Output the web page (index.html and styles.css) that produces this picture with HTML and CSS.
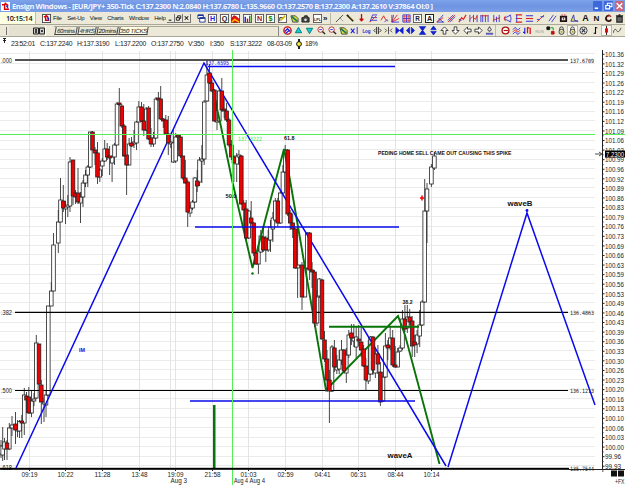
FILE: index.html
```html
<!DOCTYPE html>
<html lang="en">
<head>
    <meta charset="UTF-8">
    <title>Ensign Windows</title>
    <link rel="stylesheet" href="styles.css">
</head>
<body>
    <header class="titlebar">
        <svg class="logo" viewBox="0 0 10 10"><rect width="10" height="10" fill="#fff"/><path d="M1 3h3v5h5M4 1l4 3" stroke="#d00" stroke-width="1.6" fill="none"/><path d="M5 4h3v4z" fill="#22c"/></svg>
        <h1>Ensign Windows - [EUR/JPY+ 350-Tick C:137.2300 N:2.0840 H:137.6780 L:135.9660 O:137.2570 B:137.2300 A:137.2610 V:37864 OI:0 ]</h1>
        <div class="win-buttons">
            <span><svg viewBox="0 0 8 8"><path d="M1.5 6h3" stroke="#fff" stroke-width="1.4"/></svg></span>
            <span><svg viewBox="0 0 8 8"><path d="M3 3V1.5h4v3H5.5M1.5 3.5h3.5v3H1.5z" stroke="#fff" fill="none"/></svg></span>
            <span class="close"><svg viewBox="0 0 8 8"><path d="M1.5 1.5l5 5M6.500 1.500l-5 5" stroke="#fff" stroke-width="1.3"/></svg></span>
        </div>
    </header>

    <div class="menubar">
        <div class="clock">10:15:14</div>
        <svg class="logo" viewBox="0 0 10 10"><rect x=".5" y=".5" width="9" height="9" fill="#fff" stroke="#444"/><path d="M2 3h2v4h4M4 1l3 3" stroke="#d00" stroke-width="1.6" fill="none"/><path d="M5 4h3v4z" fill="#22c"/></svg>
        <nav>
            <a>File</a><a>Set-Up</a><a>View</a><a>Charts</a><a>Window</a><a>Help</a>
        </nav>
        <div class="mdi">
            <svg viewBox="0 0 8 9"><path d="M2 7h3" stroke="#111" stroke-width="1.2"/></svg>
            <svg viewBox="0 0 8 9"><path d="M3 4V2h3.500v3H5M1.500 4H5v3H1.500z" stroke="#111" fill="none"/></svg>
            <svg viewBox="0 0 8 9"><path d="M2 2.500l4 4M6 2.500l-4 4" stroke="#111" stroke-width="1.2"/></svg>
        </div>
        <div class="icons main-icons" data-icons="cascade"></div>
        <div class="icons app-icons" data-icons="h q hill bars n dollar edit find camera lpl"></div>
        <span class="more">»</span>
        <div class="icons draw-icons" data-icons="line pencil down fork zig fan grid boxr boxa angle pitch wave cycles vlines bars3 arc levels lines trend chan alarm tri a n2 magnet trash"></div>
    </div>

    <div class="tabbar">
        <span class="grip"></span>
        <div class="combo"><svg viewBox="0 0 12 8"><path d="M.5 1h5v6h-5zM6.500 1h5v6h-5z" fill="#ccc" stroke="#222"/><path d="M2 3h2M2 5h2M8 4h2" stroke="#111" stroke-width="1.3"/></svg></div>
        <div class="tabs"><span class="t1">60mins</span><span class="t2">4HRS</span><span class="t3">20mins</span><span class="t4">350 TICKS</span></div>
        <div class="icons chart-icons" data-icons="globe cup cdown zoom zoom find xscale log harrow hin squeeze expand hour updown up dn left right user"></div>
        <div class="icons tool-icons" data-icons="clock waves ohlc run swap lock lock* ball bar candle* curve"></div>
    </div>

    <div class="info">
        <svg class="pin" viewBox="0 0 5 6"><path d="M1 .5h3M1 2.500h3M2.500 0v5" stroke="#222" fill="none"/></svg>
        <span class="i1">23:52:01</span><span class="i2">C:137.2240</span><span class="i3">H:137.3190</span><span class="i4">L:137.2200</span><span class="i5">O:137.2750</span><span class="i6">V:350</span><span class="i7">I:350</span><span class="i8">S:137.3222</span><span class="i9">08-03-09</span>
        <svg class="watch" viewBox="0 0 6 10"><path d="M2 0h2v10H2z" fill="#222"/><circle cx="3" cy="5" r="2.4" fill="#fe3" stroke="#111"/></svg>
        <span>18%</span>
    </div>

    <main>
        <svg id="chart" viewBox="0 50 625 435" width="625" height="435"></svg>
    </main>

    <script src="chart.js"></script>
</body>
</html>
```
FILE: styles.css
```css
body {
    margin: 0;
    width: 625px;
    height: 485px;
    overflow: hidden;
    background: #fff;
    font-family: "Liberation Sans", Arial, sans-serif;
    font-size: 7px;
    color: #111;
}

svg {
    display: block;
    flex: none;
}

.titlebar,
.menubar,
.tabbar,
.info {
    display: flex;
    align-items: center;
    box-sizing: border-box;
    white-space: nowrap;
}

.titlebar {
    height: 12px;
    padding: 0 1px;
    background: linear-gradient(#7ea3ea, #6d93e2 50%, #7d9fe6);
}

.titlebar h1 {
    flex: 1;
    margin: 0 0 0 2px;
    font: bold 7.5px/12px "Open Sans", "Noto Sans", sans-serif;
    letter-spacing: -0.39px;
    color: #f4f7ff;
}

.logo {
    width: 9px;
    height: 9px;
}

.win-buttons {
    display: flex;
    gap: 2px;
}

.win-buttons span {
    width: 9px;
    height: 10px;
    background: #3c68dc;
    border-radius: 1px;
}

.win-buttons .close {
    background: #c9657e;
}

.win-buttons svg {
    width: 9px;
    height: 10px;
}

.menubar,
.tabbar {
    background: #ece9d8;
    border-bottom: 1px solid #aaa899;
}

.menubar {
    height: 13px;
}

.clock {
    flex: none;
    box-sizing: border-box;
    width: 36px;
    padding-left: 6px;
    margin-right: 6px;
    background: #ffffe1;
    font: 7.2px/12px "Open Sans", sans-serif;
    font-weight: 600;
    letter-spacing: -0.3px;
    border-right: 1px solid #bbb;
}

nav {
    display: flex;
    flex: none;
    gap: 5.5px;
    width: 114px;
    margin-left: 2px;
    font-size: 6px;
    letter-spacing: -0.25px;
}

.mdi {
    display: flex;
    flex: none;
    width: 25px;
    margin-right: 4px;
}

.mdi svg {
    box-sizing: border-box;
    width: 8px;
    height: 9px;
    border: solid #777;
    border-width: 0 1px 1px 0;
}

.icons {
    display: flex;
    flex: none;
    justify-content: space-between;
}

.icons span {
    width: 11px;
    height: 11px;
    display: flex;
    align-items: center;
    justify-content: center;
}

.icons .pressed {
    background: #f8f7f1;
    box-shadow: inset 0 0 0 1px #b9b6a7;
}

.icons svg {
    width: 9px;
    height: 9px;
}

.main-icons {
    width: 11px;
}

.app-icons {
    width: 116px;
}

.more {
    flex: none;
    width: 7px;
    font-size: 8px;
    font-weight: bold;
    line-height: 7px;
}

.draw-icons {
    width: 291px;
    padding-left: 3px;
    border-left: 1px solid #bbb8a8;
}

.tabbar {
    height: 12px;
}

.grip {
    width: 2px;
    height: 8px;
    margin: 0 2px 0 4px;
    border-right: 1px solid #777;
}

.combo {
    display: flex;
    flex: none;
    align-items: center;
    justify-content: flex-end;
    box-sizing: border-box;
    width: 37px;
    height: 10px;
    margin-right: 8px;
    background: #e4e1d0;
    border-right: 1px solid #fff;
}

.combo svg {
    width: 12px;
    height: 8px;
}

.tabs {
    display: flex;
    flex: none;
    box-sizing: border-box;
    width: 225px;
    height: 10px;
    border-top: 1px solid #aaa899;
    border-right: 1px solid #888;
    margin-right: 3px;
    font-size: 6px;
    letter-spacing: -0.25px;
}

.tabs span {
    box-sizing: border-box;
    height: 8px;
    margin-left: 1px;
    line-height: 8px;
    text-align: center;
    border: solid #444;
    border-width: 0 1px 1px;
    transform: skewX(-10deg);
}

.t1 { width: 22px; }
.t2 { width: 18px; }
.t3 { width: 21px; }
.tabs .t4 {
    width: 29px;
    background: #ffffe1;
}

.chart-icons {
    width: 213px;
    border-right: 1px solid #bbb8a8;
}

.tool-icons {
    width: 123px;
    margin-left: 4px;
}

.info {
    height: 13px;
    font-size: 6.8px;
    letter-spacing: -0.3px;
    color: #222;
}

.info span {
    flex: none;
}

.pin {
    width: 5px;
    height: 6px;
    margin: 0 4px 5px 2px;
}

.i1 { width: 29px; }
.i2 { width: 37px; }
.i3 { width: 38px; }
.i4 { width: 36px; }
.i5 { width: 37px; }
.i6 { width: 22px; }
.i7 { width: 20px; }
.i8 { width: 37px; }
.i9 { width: 29px; }

.watch {
    width: 6px;
    height: 10px;
    margin-right: 3px;
}

.grid { stroke: #ebebeb; }
.grid-v { stroke: #e4e4e4; }
.wick { stroke: #333; stroke-width: 0.9; }
.body { stroke: #222; stroke-width: 0.8; }
.up { fill: #fff; }
.down { fill: #f00000; }
.blue { stroke: #0a0aee; stroke-width: 1.5; fill: none; }
.green { stroke: #087408; stroke-width: 1.9; fill: none; }
.cross { fill: #55ee55; }
.level { stroke: #000; stroke-width: 1.2; }
.axis { stroke: #222; stroke-width: 1; }
.label { font-size: 7px; fill: #222; }
.small { font-size: 6px; }
.note { font-size: 5.5px; }
.wave { font-size: 8px; }
.mono { font: 5.8px "DejaVu Sans Mono", monospace; fill: #111; }
.bold { font-weight: bold; fill: #111; }
.t-blue { fill: #1111dd; }
.t-green { fill: #3be83b; }
.t-white { fill: #fff; }
```
FILE: chart.js
```js
const pen = (d, c = '#222', w = 1, f = 'none') => `<path d="${d}" stroke="${c}" stroke-width="${w}" fill="${f}"/>`;
const letter = (t, c, size = 9) => `<text x="5" y="8.3" text-anchor="middle" font-size="${size}" font-weight="bold" fill="${c}">${t}</text>`;
const box = '<rect x=".5" y=".5" width="9" height="9" fill="#fff" stroke="#555"/>';

// toolbar icons, all on a 10x10 grid
const icons = {
    cascade: pen('M1 1h6v4H1zM3 4h6v5H3z', '#238', 1, '#fff') + pen('M1 1.5h6M3 4.500h6', '#139', 1.5),
    h: box + letter('H', '#22d', 8),
    q: box + letter('Q', '#222', 8),
    hill: box + pen('M1 9V5l2-3 3 1 3 3v3z', '#c00', 1, '#e11') + pen('M1 9l3-3 5 3', '#fc0', 1.5),
    bars: box + pen('M2.500 9V3', '#22d', 1.6) + pen('M5 9V5', '#d00', 1.6) + pen('M7.500 9V2', '#090', 1.6),
    n: box + letter('N', '#a11', 8),
    dollar: box + letter('$', '#080', 8),
    edit: box + pen('M2 8V4h5', '#222') + pen('M3 7l5-5', '#db0', 2),
    find: pen('M1 2h5l3 3v4H3z', '#444', 1, '#dd3') + pen('M2 3l6 5', '#176', 1.8),
    camera: pen('M1 4h2l1-2h3l1 2h1v5H1z', '#222', 1, '#444') + '<circle cx="5" cy="6.500" r="1.5" fill="#ddd"/>',
    lpl: box + letter('LPL', '#222', 4),
    line: pen('M1 9L9 1', '#444') + pen('M5 4l4 4', '#999'),
    pencil: pen('M1 1l7 7', '#222', 2) + pen('M3 2l5 5', '#da1', .8),
    down: pen('M5 0v8', '#c00', 1.4) + pen('M3 5.500h4L5 8z', '#c00', 1, '#c00'),
    fork: pen('M1 9L4 1h5M3 4h6M2 7h7', '#33d') + pen('M1 9L8 2', '#d33'),
    zig: pen('M1 7l3-5 2 4 3 2', '#d22') + pen('M5 9l3-3', '#33d'),
    fan: pen('M1 9L3 1M1 9L7 1M1 9l8-4', '#d22') + pen('M1 1v8h8', '#33d'),
    grid: pen('M1 1h8v8H1zM1 5h8M5 1v8', '#33d') + pen('M3 1v8M7 1v8M1 3h8M1 7h8', '#d33', .7),
    boxr: box + letter('R', '#222', 7),
    boxa: pen('M.5.5h9v9h-9z', '#222', 1.2, '#fff') + letter('A', '#222', 8),
    angle: pen('M1 9L8 1M1 9h8M3 5l5 4', '#33d') + pen('M1 9l7-5', '#d22'),
    pitch: pen('M1 7l6-6M3 9l6-6', '#33d') + pen('M1 9l8-8M2 4l4 4', '#d22'),
    wave: pen('M1 9l3-5 2 2 3-5', '#d22', 1.3) + pen('M1 6l3 1', '#33d'),
    cycles: pen('M1 1v8M5 1v8M9 1v8', '#33d') + pen('M1 6l3-3 3 3 2-4', '#d22'),
    vlines: pen('M1 1v8M3 1v8M6 1v8M9 1v8', '#33d') + pen('M1 2h8', '#d22'),
    bars3: pen('M2 1v8M5 3v6M8 1v8', '#33d') + pen('M1 7l8-3', '#d22'),
    arc: pen('M9 1L1 5l8 4M7 1a5 5 0 0 1 0 8', '#33d') + pen('M3 2a4 4 0 0 0 0 6', '#d22'),
    levels: pen('M2 1h7M2 5h7M2 9h7', '#d22', 1.2) + pen('M3 1v8', '#33d'),
    lines: pen('M1 2h8M1 8h8', '#33d', 1.2) + pen('M1 5h8', '#d22', 1.2),
    trend: pen('M1 9l8-8', '#d22') + pen('M1 6h3M5 3h4', '#33d'),
    chan: pen('M1 8l5-7M4 9l5-7', '#33d'),
    alarm: pen('M2 3h6v5H2z', '#211', 2, '#eee') + pen('M3 1h1M6 1h1M5 4v2', '#c11', 1.3),
    tri: pen('M1 8l3-7 1 6 4 1z', '#33b', 1, '#ee3'),
    a: letter('A', '#111', 10),
    n2: letter('N', '#111', 9),
    magnet: pen('M6 2a3 3 0 1 0 2 4', '#311', 2) + pen('M5 1l3 2', '#b22', 1.5),
    trash: pen('M2 3h6v6H2zM1 2h8M4 1h2', '#222', 1.2, '#666'),
    globe: '<circle cx="5" cy="5" r="4" fill="#fff" stroke="#c11" stroke-width="1.6"/>' + pen('M2 6l3-3 3 3M3 8l4-3', '#22d', 1.5),
    cup: pen('M5 1.500l3.500 6h-7z', '#077', 1, '#1cd'),
    cdown: pen('M5 8.500l3.500-6h-7z', '#077', 1, '#1cd'),
    zoom: '<circle cx="4" cy="4" r="3" fill="#fff" stroke="#a22"/>' + pen('M6 6l3 3', '#222', 1.5) + pen('M2.500 4h3', '#22d'),
    xscale: pen('M1 3l4 5M5 3L1 8', '#22d', 1.2) + pen('M8 1v8', '#22d'),
    log: letter('Log', '#22d', 5),
    harrow: pen('M3 3L1 5l2 2M7 3l2 2-2 2M4 1v8M6 1v8', '#222'),
    hin: pen('M1 3l2 2-2 2M9 3L7 5l2 2M5 1v8', '#444'),
    squeeze: pen('M1 1.500L5 5 1 8.500zM9 1.500L5 5l4 3.500z', '#12c', .8, '#12c'),
    expand: pen('M4 1.500L.5 5 4 8.500zM6 1.500L9.500 5 6 8.500z', '#12c', .8, '#12c'),
    hour: pen('M2 1h6L5 5l3 4H2l3-4z', '#12c', 1.2, '#12c'),
    updown: pen('M5 0L2 4h6zM5 10L2 6h6z', '#12c', .8, '#12c'),
    up: pen('M5 1l4 4H6.500v4h-3V5H1z', '#333', 1, '#fff'),
    dn: pen('M5 9L1 5h2.500V1h3v4H9z', '#333', 1, '#fff'),
    left: pen('M1 5l4-4v2.500h4v3H5V9z', '#333', 1, '#fff'),
    right: pen('M9 5L5 1v2.500H1v3h4V9z', '#333', 1, '#fff'),
    user: pen('M5 1l2 3-2 2-2-2zM1 8h8', '#667', 1.2, '#fff') + pen('M1 9h8', '#22d'),
    clock: '<circle cx="5" cy="5" r="3.800" fill="#fff" stroke="#a11" stroke-width="1.5"/>' + pen('M3 5h5', '#a11', 1.3),
    waves: pen('M1 4q3-4 4-1t4-1M1 9q3-4 4-1t4-1', '#33d') + pen('M1 6.500q3-4 4-1t4-1', '#d22'),
    ohlc: pen('M2 2v7M0 7h2', '#22d', 1.3) + pen('M5 1v7M8 2v7M5 2h2', '#d11', 1.4),
    run: letter('RUN', '#bbb8aa', 4.5),
    swap: pen('M1 1h3v3H1z', '#111', 1, '#111') + pen('M5 2h3v3', '#090') + pen('M6 6h3v3H6z', '#b11', 1, '#b11'),
    lock: pen('M3 5V3a2 2 0 0 1 4 0v2', '#333') + '<circle cx="5" cy="6.500" r="2.800" fill="#eed" stroke="#333"/>' + pen('M4 6.500h2', '#aa1', 2),
    ball: '<circle cx="5" cy="5" r="4" fill="#eee" stroke="#333"/>' + pen('M3 3l4 4M7 3L3 7', '#334', 1.3),
    bar: pen('M5 1v8M5 2h2M3 8h2', '#111', 1.2),
    candle: pen('M5 0v10', '#111') + pen('M4 3h2v4H4z', '#c00', 1, '#e00'),
    curve: pen('M0 8q2-7 4-3t5-3', '#444')
};

document.querySelectorAll('.icons').forEach(bar => {
    bar.innerHTML = bar.dataset.icons.split(' ').map(name => {
        const key = name.replace('*', '');
        return `<span class="${key !== name ? 'pressed' : ''}"><svg viewBox="0 0 10 10">${icons[key]}</svg></span>`;
    }).join('');
});

const out = [];
const line = (cls, x1, y1, x2, y2) => out.push(`<line class="${cls}" x1="${x1}" y1="${y1}" x2="${x2}" y2="${y2}"/>`);
const rect = (cls, x, y, w, h) => out.push(`<rect class="${cls}" x="${x}" y="${y}" width="${w}" height="${h}"/>`);
const poly = (cls, pts) => out.push(`<polyline class="${cls}" points="${pts}"/>`);
const text = (cls, x, y, t, len) => out.push(`<text class="${cls}" x="${x}" y="${y}" textLength="${len}" lengthAdjust="spacingAndGlyphs">${t}</text>`);

// price scale
const prices = ('101.36 101.32 101.29 101.26 101.22 101.19 101.16 101.12 101.09 101.06 101.03 100.99 100.96 100.92 100.89 ' +
    '100.86 100.83 100.79 100.76 100.73 100.69 100.66 100.63 100.59 100.56 100.53 100.49 100.46 100.43 100.39 100.36 ' +
    '100.33 100.30 100.26 100.23 100.20 100.16 100.13 100.10 100.06 100.03 100.00 99.96 99.93').split(' ');
const priceY = i => 54.300 + i * 9.580;
prices.forEach((p, i) => line('grid', 0, Math.round(priceY(i)) - 0.5, 595, Math.round(priceY(i)) - 0.5));

// time scale
const times = [[29, '09:19'], [65, '10:22'], [102, '11:28'], [139, '13:48'], [175, '19:09'], [212, '21:58'], [248, '01:03'],
    [285, '02:59'], [322, '04:41'], [358, '06:31'], [395, '08:44'], [431, '10:14']];
times.forEach(([x]) => line('grid-v', x + 0.5, 51, x + 0.5, 468));
line('grid-v', 170.5, 51, 170.5, 468);

// x, high, low, body top, body bottom, up (1) / down (0)
const candles = [
    [1, 440, 458, 446, 454, 1], [2.7, 427, 461, 446, 455, 1], [4.5, 438, 460, 442, 449, 1], [7, 440, 460, 443, 449, 0],
    [9.3, 423, 450, 428, 449, 1], [12, 416, 436, 425, 428, 1], [15.500, 412, 444, 424, 430, 0], [17.500, 420, 437, 428, 431, 1],
    [19.500, 420, 438, 421.500, 431, 1], [21.800, 415, 438, 421, 423, 0], [24.3, 388, 435, 395, 423, 1], [26.500, 392, 413, 396, 400, 0],
    [28.800, 387, 414, 397, 413, 0], [31.500, 391, 417, 401, 413, 1], [34, 393, 406, 399, 401, 1], [36.300, 335, 399, 343, 398, 1],
    [39, 344, 385, 344, 384, 0], [41.3, 380, 424, 385, 402, 0], [44, 398, 422, 402, 404, 1], [46, 391, 417, 395, 405, 1],
    [48.300, 306, 396, 306, 395, 1], [51.300, 282, 306, 291, 306, 1], [53.500, 233, 291, 245, 291, 1], [58.300, 210, 253, 222, 243, 1],
    [60.500, 178, 222, 200, 222, 1], [63.300, 185, 212, 201, 208, 0], [65.500, 201, 224, 206, 209, 1], [67.800, 195, 217, 205, 207, 1],
    [70, 157, 212, 162, 206, 1], [73, 160, 205, 160, 196, 0], [75.500, 190, 204, 193, 197, 0], [78, 168, 204, 193, 202, 0],
    [80.500, 192, 223, 197, 203, 1], [83, 180, 207, 183, 197, 1], [85.500, 170, 187, 175, 183, 1], [87.800, 165, 187, 167, 175, 1],
    [90.300, 132, 168, 132, 167, 1], [92.500, 131, 150, 132, 150, 0], [95, 147, 165, 150, 153, 0], [97.500, 142, 184, 153, 177, 0],
    [99.800, 168, 182, 170, 177, 1], [102.300, 158, 176, 161, 166, 1], [104.700, 140, 162, 149, 161, 1], [107.200, 143, 160, 149, 157, 0],
    [109.600, 146, 175, 156, 158, 0], [112.100, 155, 182, 157, 163, 1], [114.500, 143, 165, 145, 157, 1], [117, 102, 145, 104, 145, 1],
    [119.300, 88, 106, 103, 104.500, 0], [121.800, 104, 128, 106, 126, 0], [124.200, 124, 157, 126, 156, 0], [126.600, 155, 195, 155, 165, 0],
    [129.100, 138, 165, 144, 165, 1], [131.500, 137, 147, 143, 146, 0], [134, 130, 148, 142, 144, 1], [136.500, 121, 150, 122, 143, 1],
    [138.800, 101, 122, 107, 122, 1], [141.500, 102, 122, 107, 121, 0], [143.800, 104, 136, 121, 130, 0], [146.200, 107, 131, 109, 130, 1],
    [148.600, 106, 140, 108, 139, 0], [151, 128, 147, 138, 144, 0], [153.500, 132, 147, 138, 144, 1], [156, 97, 139, 99, 138, 1],
    [158.400, 92, 100, 98, 100, 0], [160.700, 86, 120, 99, 119, 0], [163.300, 118, 128, 119, 121, 0], [165.800, 115, 134, 120, 134, 0],
    [168.300, 116, 155, 134, 143, 0], [170.700, 135, 148, 142, 144, 1], [173.300, 130, 163, 143, 162, 1], [175.700, 133, 163, 137, 161, 1],
    [178, 135, 150, 135, 137, 0], [180.500, 134, 158, 137, 156, 0], [182.900, 156, 180, 156, 178, 0], [185.300, 160, 184, 178, 183, 0],
    [187.700, 180, 227, 182, 212, 0], [190.100, 205, 217, 208, 213, 1], [192.500, 200, 210, 202, 208, 1], [194.900, 177, 203, 178, 202, 1],
    [197.200, 170, 192, 181, 186, 0], [199.500, 157, 186, 160, 182, 1], [201.900, 145, 183, 159, 161, 1], [204.200, 100, 165, 102, 159, 1],
    [206.900, 60, 102, 75, 101, 1], [209.500, 64, 84, 73, 83, 0], [211.900, 80, 92, 83, 91, 0], [214.400, 89, 122, 90, 121, 0],
    [217, 100, 130, 110, 122, 1], [219.300, 88, 123, 91, 121, 1], [221.800, 78, 112, 91, 110, 0], [224.200, 98, 118, 109, 111, 0],
    [226.600, 103, 122, 111, 120, 0], [229, 118, 147, 120, 145, 0], [231.400, 140, 160, 145, 157, 0], [233.900, 155, 182, 157, 163, 0],
    [236.700, 153, 182, 156, 164, 1], [238.900, 150, 165, 155, 157, 1], [241.300, 155, 205, 156, 204, 0], [243.700, 200, 227, 203, 210, 0],
    [246.200, 200, 240, 209, 238, 0], [248.700, 210, 239, 211, 238, 1], [251.200, 201, 224, 218, 223, 0], [253.700, 222, 256, 223, 253, 0],
    [256, 252, 265, 253, 264, 0], [258.400, 245, 274, 251, 264, 1], [260.800, 230, 253, 236, 252, 1], [263.300, 227, 252, 237, 250, 0],
    [265.800, 236, 262, 238, 250, 0], [268.200, 230, 252, 240, 250, 1], [270.500, 220, 252, 227, 240, 1], [272.900, 212, 242, 218, 229, 1],
    [275.300, 198, 222, 201, 220, 1], [277.800, 198, 227, 201, 223, 0], [280.300, 190, 224, 193, 223, 1], [282.900, 165, 194, 172, 193, 1],
    [285.200, 145, 173, 150, 172, 1], [287.700, 149, 216, 150, 214, 0], [290.200, 210, 230, 213, 223, 0], [292.700, 214, 238, 223, 229, 0],
    [295.200, 228, 269, 229, 268, 0], [297.600, 226, 298, 265, 268, 1], [302, 262, 310, 265, 297, 0], [304.900, 266, 297, 268, 297, 1],
    [307.200, 232, 269, 233, 268, 1], [309.600, 232, 280, 233, 270, 0], [312.100, 262, 288, 270, 272, 0], [314.500, 270, 327, 272, 323, 0],
    [317, 290, 326, 297, 323, 1], [319.400, 278, 298, 279, 296, 1], [322, 279, 340, 280, 339, 0], [324.500, 331, 362, 340, 359, 0],
    [327, 350, 392, 359, 380, 0], [329.400, 370, 423, 380, 391, 0], [332, 345, 392, 347, 391, 1], [334.400, 340, 372, 348, 367, 0],
    [336.800, 355, 374, 367, 370, 1], [339.200, 350, 374, 360, 369, 1], [341.500, 340, 365, 350, 360, 1], [344, 349, 373, 350, 371, 0],
    [346.300, 348, 383, 355, 373, 1], [348.800, 330, 358, 335, 355, 1], [351.400, 324, 345, 333, 338, 0], [353.800, 324, 347, 338, 341, 1],
    [356.200, 326, 358, 337, 347, 1], [358.700, 325, 346, 339, 341, 0], [361.200, 327, 357, 342, 350, 0], [363.600, 345, 367, 349, 366, 0],
    [365.900, 358, 390, 366, 380, 0], [368.300, 340, 384, 374, 381, 1], [370.600, 336, 375, 337, 374, 1], [373, 336, 375, 337, 370, 0],
    [375.400, 350, 378, 354, 373, 1], [377.900, 345, 374, 354, 364, 0], [380.400, 362, 406, 372, 402, 0], [383, 372, 402, 377, 401, 1],
    [385.400, 333, 378, 346, 377, 1], [387.800, 340, 360, 345, 348, 0], [390.200, 326, 350, 338, 346, 1], [392.700, 330, 367, 338, 365, 0],
    [395.200, 346, 368, 365, 367, 0], [397.700, 348, 367, 352, 367, 1], [400.100, 345, 352, 348, 351, 1], [402.500, 310, 350, 319, 348, 1],
    [404.900, 305, 332, 319, 329, 0], [407.300, 305, 333, 317, 328, 1], [409.700, 309, 325, 317, 322, 0], [412.200, 316, 357, 321, 346, 0],
    [414.700, 335, 357, 342, 345, 0], [417.100, 330, 353, 335, 344, 1], [419.700, 310, 347, 325, 336, 1], [422.200, 300, 326, 302, 325, 1],
    [424.700, 179, 303, 211, 302, 1], [427, 183, 243, 189, 211, 1], [431.400, 164, 187, 167, 184, 1], [434.400, 152, 170, 156, 168, 1]
];
const drawCandles = dir => candles.filter(c => c[5] === dir).forEach(([x, hi, lo, top, bottom, up]) => {
    line('wick', x, hi, x, lo);
    rect(`body ${up ? 'up' : 'down'}`, x - 1.8, top, 3.6, Math.max(bottom - top, 1));
});

drawCandles(1);

// retracement levels
out.push('<rect x="15" y="59" width="553" height="2" fill="#555"/>');
line('level', 15, 312.4, 568, 312.4);
line('level', 15, 390.5, 568, 390.5);
text('label', 1, 63, '.000', 11);
text('label', 1, 315, '.382', 11);
text('label', 1, 393, '.500', 11);
text('label', 1, 470, '.618', 11);
text('mono', 570, 62.5, '137.6709', 24);
text('mono', 570, 314.5, '136.4863', 24);
text('mono', 570, 392.5, '136.1213', 24);
text('mono', 570, 470.5, '135.7544', 24);

// trend lines run over the hollow candles and under the filled ones
poly('green', '209,73 220,122 232,180 252.500,268 284,149 290,180 326,390 398,316 405,335 439.500,464');
poly('blue', '16,468 204,63 446,466');
drawCandles(0);
line('green', 329, 326.8, 419, 326.8);
out.push('<rect x="213" y="405" width="2.5" height="63" fill="#087408"/>');
poly('blue', '448,467 527,213 595,405');
line('blue', 208, 66.5, 395, 66.5);
line('blue', 195, 227, 399, 227);
line('blue', 190, 401, 415, 401);
out.push('<circle cx="252.500" cy="273.500" r="1.2" fill="#087408"/><circle cx="527" cy="210.500" r="1.4" fill="#0a0aee"/>');
out.push('<path d="M422 195.500v5M420 198h4" stroke="#f00" stroke-width="1.5"/>');

// cursor cross
rect('cross', 0, 134, 595, 1);
rect('cross', 603, 134, 22, 1);
rect('cross', 232, 50, 1, 435);

text('mono t-blue', 205.500, 65, '137.6595', 23.500);
text('mono t-green', 238, 140.500, '137.3222', 24);
text('label bold small', 284, 140, '61.8', 10.500);
text('label bold small', 225.500, 197.500, '50.0', 11);
text('label bold small', 402.500, 303.500, '38.2', 10);
text('label bold small t-blue', 79, 352, 'IM', 6);
text('label bold note', 378, 155, 'PEDING HOME SELL CAME OUT CAUSING THIS SPIKE', 133.500);
text('label bold wave', 507.500, 205.5, 'waveB', 25);
text('label bold wave', 387.500, 458, 'waveA', 25);

// axes
out.push('<rect x="0" y="467.8" width="569" height="2" fill="#000"/>');
line('axis', 569, 469.5, 625, 469.5);
line('axis', 602.5, 50, 602.5, 469);
prices.forEach((p, i) => {
    const y = priceY(i);
    line('axis', 602, y, 604.5, y);
    line('axis', 602, y + 4.8, 603.5, y + 4.8);
    text('label', 605, y + 2.700, p, p.length > 5 ? 19 : 16);
});
out.push('<rect x="605" y="150.5" width="20" height="7" fill="#000"/>');
text('label t-white', 606, 156.500, '7.2300', 18);
out.push('<path d="M595 154h6M599 152l3 2-3 2" stroke="#222" fill="none" stroke-width=".8"/>');
times.forEach(([x, t]) => {
    line('axis', x + 0.5, 469, x + 0.5, 471);
    text('label', x - 7.500, 477, t, 16);
});
text('label', 170.500, 483.200, 'Aug 3', 16.500);
text('label', 234, 483.200, 'Aug 4', 14);
text('label', 249.500, 483.200, 'Aug 4', 15.500);
out.push('<rect x="611" y="470.5" width="6" height="6" fill="#111"/><rect x="618" y="470.5" width="6" height="6" fill="#111"/>');
text('label', 615, 483.8, '+FX', 9.5);

document.getElementById('chart').innerHTML = out.join('');
```
